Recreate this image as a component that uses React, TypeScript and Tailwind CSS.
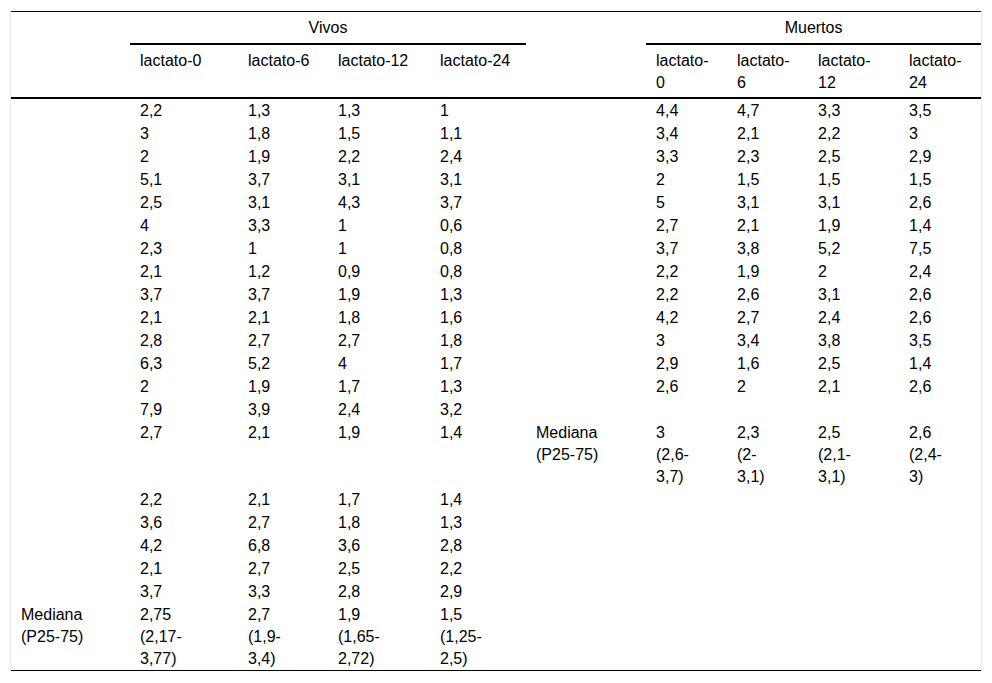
import React from 'react';

type Cell = string | string[];

const vivos: string[][] = [
  ['2,2', '1,3', '1,3', '1'],
  ['3', '1,8', '1,5', '1,1'],
  ['2', '1,9', '2,2', '2,4'],
  ['5,1', '3,7', '3,1', '3,1'],
  ['2,5', '3,1', '4,3', '3,7'],
  ['4', '3,3', '1', '0,6'],
  ['2,3', '1', '1', '0,8'],
  ['2,1', '1,2', '0,9', '0,8'],
  ['3,7', '3,7', '1,9', '1,3'],
  ['2,1', '2,1', '1,8', '1,6'],
  ['2,8', '2,7', '2,7', '1,8'],
  ['6,3', '5,2', '4', '1,7'],
  ['2', '1,9', '1,7', '1,3'],
  ['7,9', '3,9', '2,4', '3,2'],
  ['2,7', '2,1', '1,9', '1,4'],
  ['2,2', '2,1', '1,7', '1,4'],
  ['3,6', '2,7', '1,8', '1,3'],
  ['4,2', '6,8', '3,6', '2,8'],
  ['2,1', '2,7', '2,5', '2,2'],
  ['3,7', '3,3', '2,8', '2,9'],
];

const muertos: string[][] = [
  ['4,4', '4,7', '3,3', '3,5'],
  ['3,4', '2,1', '2,2', '3'],
  ['3,3', '2,3', '2,5', '2,9'],
  ['2', '1,5', '1,5', '1,5'],
  ['5', '3,1', '3,1', '2,6'],
  ['2,7', '2,1', '1,9', '1,4'],
  ['3,7', '3,8', '5,2', '7,5'],
  ['2,2', '1,9', '2', '2,4'],
  ['2,2', '2,6', '3,1', '2,6'],
  ['4,2', '2,7', '2,4', '2,6'],
  ['3', '3,4', '3,8', '3,5'],
  ['2,9', '1,6', '2,5', '1,4'],
  ['2,6', '2', '2,1', '2,6'],
];

const medianaVivos: Cell[] = [
  ['2,75', '(2,17-', '3,77)'],
  ['2,7', '(1,9-', '3,4)'],
  ['1,9', '(1,65-', '2,72)'],
  ['1,5', '(1,25-', '2,5)'],
];

const medianaMuertos: Cell[] = [
  ['3', '(2,6-', '3,7)'],
  ['2,3', '(2-', '3,1)'],
  ['2,5', '(2,1-', '3,1)'],
  ['2,6', '(2,4-', '3)'],
];

const Lines = ({ value }: { value: Cell }) => {
  if (typeof value === 'string') return <>{value}</>;
  return (
    <>
      {value.map((v, i) => (
        <React.Fragment key={i}>
          {i > 0 && <br />}
          {v}
        </React.Fragment>
      ))}
    </>
  );
};

const td = 'px-[10px] pt-[1px] pb-0 align-top text-left font-normal';

export default function App() {
  // 21 body rows: vivos on the left, muertos on the right
  const rows: { left: Cell[]; right: Cell[] }[] = [];
  for (let i = 0; i < 21; i++) {
    let left: Cell[];
    if (i < 20) left = ['', ...vivos[i]];
    else left = [['Mediana', '(P25-75)'], ...medianaVivos];

    let right: Cell[];
    if (i < 13) right = ['', ...muertos[i]];
    else if (i === 14) right = [['Mediana', '(P25-75)'], ...medianaMuertos];
    else right = ['', '', '', '', ''];

    rows.push({ left, right });
  }

  return (
    <div
      className="min-h-screen bg-white text-black"
      style={{ fontFamily: '"Liberation Sans", Arial, sans-serif' }}
    >
      <div className="ml-[10px] mt-[11px] w-[972px] border-x border-[#ebebeb]">
        <table className="w-[970px] table-fixed border-collapse text-[16px] leading-[22px]">
          <colgroup>
            <col className="w-[119px]" />
            <col className="w-[108px]" />
            <col className="w-[90px]" />
            <col className="w-[102px]" />
            <col className="w-[96px]" />
            <col className="w-[120px]" />
            <col className="w-[81px]" />
            <col className="w-[81px]" />
            <col className="w-[91px]" />
            <col className="w-[82px]" />
          </colgroup>
          <thead>
            <tr className="border-t border-black">
              <th className="px-[10px] pt-[5px] pb-[4px]" />
              <th colSpan={4} className="border-b-2 border-black px-[10px] pt-[5px] pb-[4px] text-center font-normal">
                Vivos
              </th>
              <th className="px-[10px] pt-[5px] pb-[4px]" />
              <th colSpan={4} className="border-b-2 border-black px-[10px] pt-[5px] pb-[4px] text-center font-normal">
                Muertos
              </th>
            </tr>
            <tr className="border-b-2 border-black">
              <th className="px-[10px] pt-[5px] pb-[3px]" />
              {['lactato-0', 'lactato-6', 'lactato-12', 'lactato-24'].map((h) => (
                <th key={h} className="px-[10px] pt-[5px] pb-[3px] align-top text-left font-normal whitespace-nowrap">
                  {h}
                </th>
              ))}
              <th className="px-[10px] pt-[5px] pb-[3px]" />
              {['0', '6', '12', '24'].map((h) => (
                <th key={h} className="px-[10px] pt-[5px] pb-[3px] align-top text-left font-normal">
                  lactato-
                  <br />
                  {h}
                </th>
              ))}
            </tr>
          </thead>
          <tbody>
            {rows.map((r, i) => (
              <tr key={i} className={i === rows.length - 1 ? 'border-b border-black' : ''}>
                {r.left.map((c, j) => (
                  <td key={'l' + j} className={td}>
                    <Lines value={c} />
                  </td>
                ))}
                {r.right.map((c, j) => (
                  <td key={'r' + j} className={td}>
                    <Lines value={c} />
                  </td>
                ))}
              </tr>
            ))}
          </tbody>
        </table>
      </div>
    </div>
  );
}
